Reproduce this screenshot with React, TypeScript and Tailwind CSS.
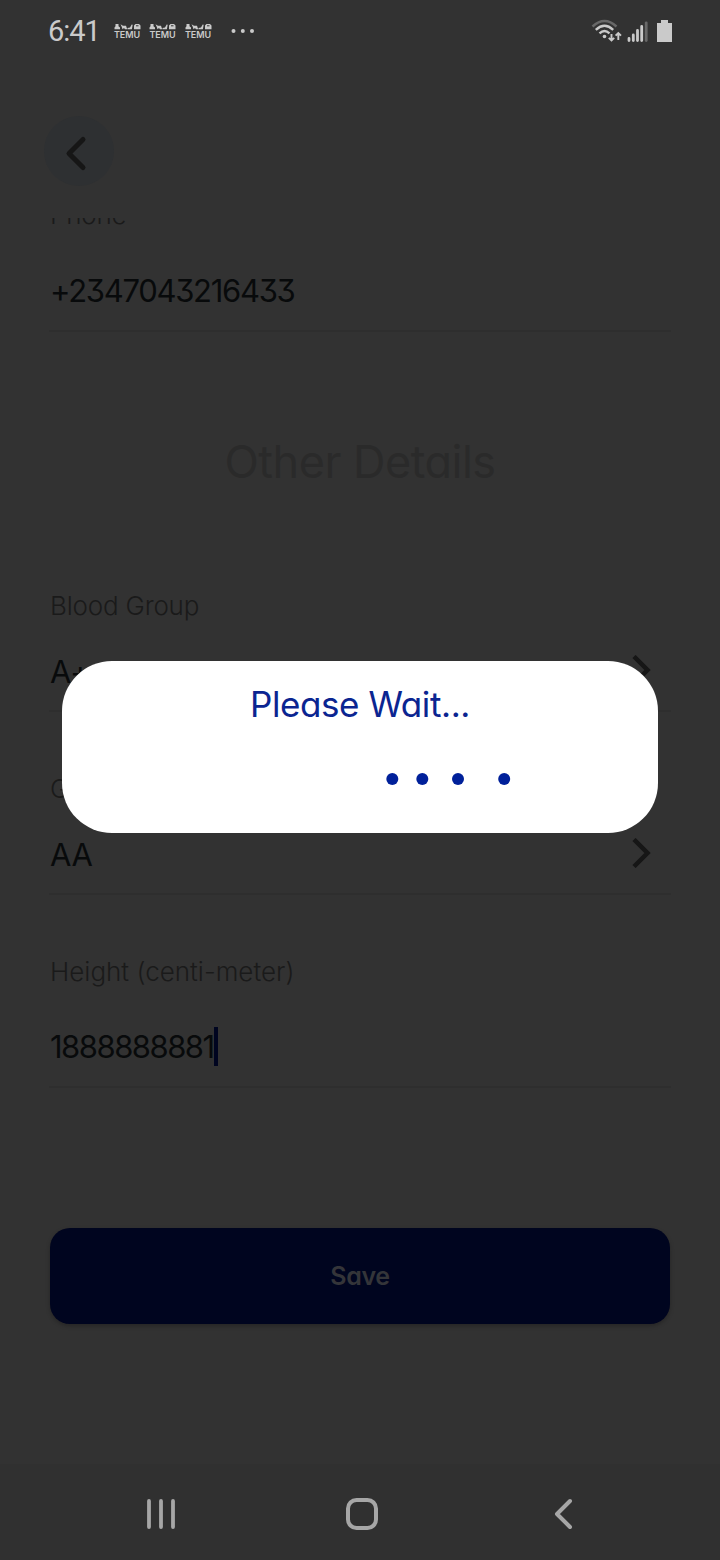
import type { ReactNode } from "react";

function TemuIcon() {
  return (
    <div className="flex w-[27px] flex-col items-center">
      <svg width="27" height="6" viewBox="0 0 27 6" fill="#cacaca">
        <path d="M1.500 0h3v2.200L6 3.500V5.300H0.500V3.500l1-1.300zM6.500 0.300l2.500 1.500h3l1.200 3.500H11l-1-1.200-1.500 1.200L7.800 3zM13.500 4l2.500-.5 1.700-3 1 .3-.8 4.500h-4.400zM20 1.500 21.500 0h3.500l1.500 1.500v3.800h-6.500z" />
        <path d="M22 1.300h2.500v1H22z" fill="#323232" />
      </svg>
      <span className="mt-px h-[8px] text-[9px] leading-[8px] font-semibold tracking-[-0.1px] text-[#cacaca]">TEMU</span>
    </div>
  );
}

function StatusBar() {
  return (
    <div className="flex h-[62px] shrink-0 items-center pr-12 pl-12 text-[#cacaca]">
      <span className="w-[65.500px] pt-px font-[Roboto,sans-serif] text-[29px] leading-none tracking-[-1px]">6:41</span>
      <div className="flex gap-[8.500px]">
        <TemuIcon />
        <TemuIcon />
        <TemuIcon />
      </div>
      <svg className="ml-[18px]" width="26" height="6" viewBox="0 0 26 6" fill="#cacaca">
        <circle cx="3.500" cy="3" r="2" />
        <circle cx="12.800" cy="3" r="2" />
        <circle cx="22" cy="3" r="2" />
      </svg>
      <svg className="ml-auto" width="82" height="26" viewBox="590 18 82 26" fill="none" stroke="#cacaca" strokeWidth="2.400">
        <path d="M592.500 26.500Q604.500 15.500 616.500 26.500" stroke="#686868" />
        <path d="M595.800 29.800Q604.500 21.800 613.200 29.800" />
        <path d="M599.500 33.300Q604.500 28.800 609.500 33.300" />
        <circle cx="604.500" cy="36.500" r="1.800" fill="#cacaca" stroke="none" />
        <path d="M611.500 34v6M608.800 37.800l2.700 2.700 2.700-2.700M618.300 40v-7M615.600 35.700l2.700-2.700 2.700 2.700" strokeWidth="1.900" />
        <g strokeWidth="2.800" strokeLinecap="round">
          <path d="M629 38.500v2M633.300 35v5.500M637.500 30.500v10M641.700 26.500v14" />
          <path d="M646.200 22.800v17.700" stroke="#686868" />
        </g>
        <path d="M661 20h7v3h4v19H657V23h4z" fill="#cacaca" stroke="none" />
      </svg>
    </div>
  );
}

function Label({ children, className }: { children: ReactNode; className: string }) {
  return <div className={`h-8 pt-px text-[26px] leading-8 font-light whitespace-nowrap text-[#1a1a1a] ${className}`}>{children}</div>;
}

function Value({ children, className }: { children: ReactNode; className: string }) {
  return (
    <div className={`flex h-10 items-center justify-between pr-[19px] text-[31px] leading-10 whitespace-nowrap text-[#080a0b] ${className}`}>
      {children}
    </div>
  );
}

function Divider({ className }: { className: string }) {
  return <div className={`-mx-px h-[2px] bg-[#2e2e2e] ${className}`} />;
}

function RowChevron() {
  return (
    <svg className="relative -top-[2px]" width="19" height="30" viewBox="0 0 19 30" fill="none" stroke="#161616" strokeWidth="4.500">
      <path d="M2 1.500 15.500 15 2 28.500" />
    </svg>
  );
}

export default function App() {
  return (
    <div className="relative flex h-[1560px] w-[720px] flex-col overflow-hidden bg-[#323232] font-[Inter,sans-serif] [font-feature-settings:'cv11','cv09']">
      <StatusBar />
      <header className="h-[156px] shrink-0 pt-[54px] pl-11">
        <button className="flex size-[70px] items-center justify-center rounded-full bg-[#2e3032]" aria-label="Back">
          <svg width="70" height="70" viewBox="0 0 70 70" fill="none" stroke="#161616" strokeWidth="5" strokeLinecap="round" strokeLinejoin="round">
            <path d="M39 23.500 25 37.500 39 51.500" />
          </svg>
        </button>
      </header>

      <main className="h-[1246px] shrink-0 overflow-hidden px-[50px]">
        <Label className="-mt-5 tracking-[-0.2px]">Phone</Label>
        <Value className="mt-[41px] tracking-[-1.300px]">
          <span>+2347043216433</span>
        </Value>
        <Divider className="mt-[19px]" />

        <h1 className="mt-[101px] h-14 pt-px text-center text-[45px] leading-[56px] font-normal tracking-[-0.5px] text-[#2a2a2a]">Other Details</h1>

        <Label className="mt-[100px] tracking-[-0.2px]">Blood Group</Label>
        <Value className="mt-[31px] tracking-[-0.4px]">
          <span>A+</span>
          <RowChevron />
        </Value>
        <Divider className="mt-[18px]" />

        <Label className="mt-[60px]">Genotype</Label>
        <Value className="mt-[31px] tracking-[-0.4px]">
          <span>AA</span>
          <RowChevron />
        </Value>
        <Divider className="mt-[18px]" />

        <Label className="mt-[60px]">Height (centi-meter)</Label>
        <Value className="mt-10 tracking-[-1.500px]">
          <span className="flex items-center">
            <span className="w-[164px]">1888888881</span>
            <span className="relative -top-px h-[39px] w-1 bg-[#000520]" />
          </span>
        </Value>
        <Divider className="mt-[19px]" />

        <button className="mt-[140px] flex h-24 w-full items-center justify-center rounded-[20px] bg-[#00051f] pt-[2px] text-[25px] font-semibold tracking-[-0.4px] text-[#343539] shadow-[0_2px_4px_rgba(0,0,0,0.25)]">
          Save
        </button>
      </main>

      <nav className="flex h-24 shrink-0 items-center bg-[#303030]">
        <svg className="mt-1 ml-[145px]" width="32" height="32" viewBox="0 0 32 32" stroke="#a6a6a6" strokeWidth="3.800" strokeLinecap="round">
          <path d="M4 3v26M16 3v26M28 3v26" />
        </svg>
        <svg className="mt-1 ml-[168px]" width="34" height="34" viewBox="0 0 34 34" fill="none" stroke="#a6a6a6" strokeWidth="4">
          <rect x="3" y="3" width="28" height="28" rx="8.500" />
        </svg>
        <svg className="mt-1 ml-[173px]" width="24" height="32" viewBox="0 0 24 32" fill="none" stroke="#a6a6a6" strokeWidth="4" strokeLinecap="round" strokeLinejoin="round">
          <path d="M18 3 5 16l13 13" />
        </svg>
      </nav>

      <div role="dialog" className="absolute top-[661px] left-[62px] h-[172px] w-[596px] rounded-[50px] bg-white pt-5">
        <p className="text-center text-[35px] leading-[46px] tracking-[-0.4px] text-[#0b2591]">Please Wait...</p>
        <svg className="mt-[46px] ml-[324px]" width="126" height="12" viewBox="0 0 126 12" fill="#00209a">
          <circle cx="6.300" cy="6" r="6" />
          <circle cx="36.300" cy="6" r="6" />
          <circle cx="72" cy="6" r="6" />
          <circle cx="118.200" cy="6" r="6" />
        </svg>
      </div>
    </div>
  );
}
